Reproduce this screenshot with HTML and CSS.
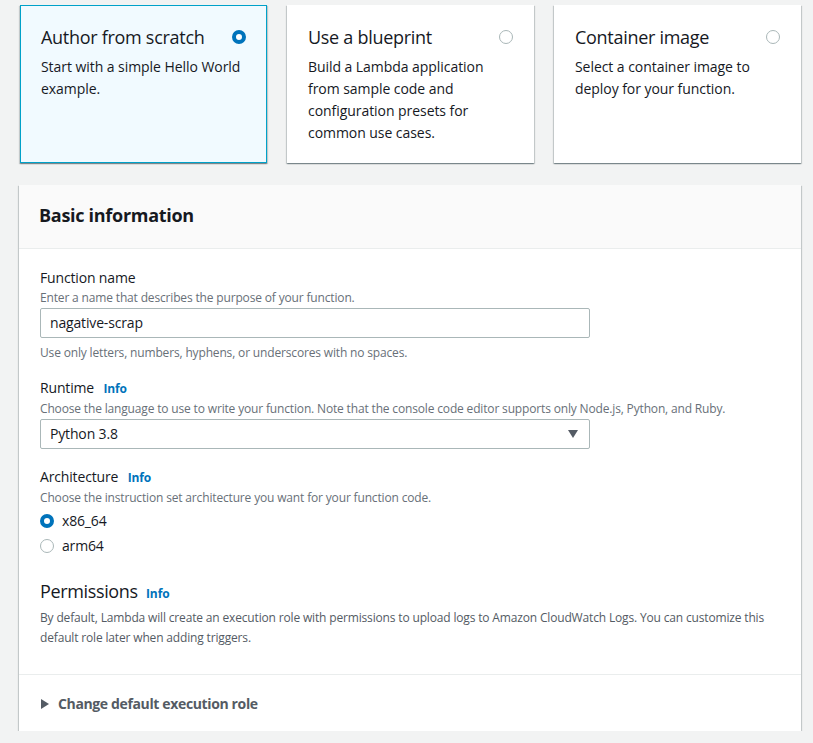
FILE: index.html
```html
<!DOCTYPE html>
<html lang="en">
<head>
<meta charset="utf-8">
<title>Create function</title>
<link rel="stylesheet" href="styles.css">
</head>
<body>
<div class="page">
  <div class="cards">
    <div class="card selected">
      <div class="card-head">
        <span class="card-title">Author from scratch</span>
        <span class="radio on"></span>
      </div>
      <p class="card-desc">Start with a simple Hello World example.</p>
    </div>
    <div class="card">
      <div class="card-head">
        <span class="card-title">Use a blueprint</span>
        <span class="radio"></span>
      </div>
      <p class="card-desc">Build a Lambda application from sample code and configuration presets for common use cases.</p>
    </div>
    <div class="card">
      <div class="card-head">
        <span class="card-title">Container image</span>
        <span class="radio"></span>
      </div>
      <p class="card-desc">Select a container image to deploy for your function.</p>
    </div>
  </div>

  <div class="panel">
    <div class="panel-header"><h2>Basic information</h2></div>
    <div class="panel-body">
      <div class="field">
        <div class="label">Function name</div>
        <div class="desc">Enter a name that describes the purpose of your function.</div>
        <div class="input">nagative-scrap</div>
        <div class="constraint">Use only letters, numbers, hyphens, or underscores with no spaces.</div>
      </div>
      <div class="field gap1">
        <div class="label">Runtime <a class="info">Info</a></div>
        <div class="desc">Choose the language to use to write your function. Note that the console code editor supports only Node.js, Python, and Ruby.</div>
        <div class="input select"><span>Python 3.8</span><span class="caret-down"></span></div>
      </div>
      <div class="field gap2">
        <div class="label">Architecture <a class="info">Info</a></div>
        <div class="desc">Choose the instruction set architecture you want for your function code.</div>
        <div class="radios">
          <div class="radio-row"><span class="radio on"></span><span>x86_64</span></div>
          <div class="radio-row"><span class="radio"></span><span>arm64</span></div>
        </div>
      </div>
      <div class="field gap3">
        <div class="perm-title">Permissions <a class="info">Info</a></div>
        <div class="perm-desc">By default, Lambda will create an execution role with permissions to upload logs to Amazon CloudWatch Logs. You can customize this default role later when adding triggers.</div>
      </div>
    </div>
    <div class="panel-footer">
      <span class="caret-right"></span><span class="expander">Change default execution role</span>
    </div>
  </div>
</div>
</body>
</html>
```

FILE: styles.css
```css
* { box-sizing: border-box; }
html, body { margin: 0; padding: 0; }
body {
  background: #f2f3f3;
  font-family: "Open Sans", "Noto Sans", Arial, sans-serif;
  letter-spacing: -0.01em;
  color: #16191f;
}
.page {
  padding: 5px 12px 0 19px;
}
.cards {
  display: flex;
  gap: 20px;
  margin-left: 1px;
}
.card {
  width: 247px;
  height: 158px;
  background: #fff;
  padding: 20px 20px 0 20px;
  border: 1px solid transparent;
  box-shadow: 0 1px 1px 0 rgba(0,28,36,.3), 1px 1px 1px 0 rgba(0,28,36,.15), -1px 1px 1px 0 rgba(0,28,36,.15);
}
.card.selected {
  background: #f1faff;
  border-color: #00a1c9;
}
.card-head {
  display: flex;
  justify-content: space-between;
  align-items: center;
  height: 22px;
}
.card-title {
  font-size: 18px;
  line-height: 22px;
  letter-spacing: -0.016em;
}
.card-desc {
  margin: 8px 0 0;
  font-size: 14px;
  line-height: 22px;
  letter-spacing: -0.004em;
}
.radio {
  display: inline-block;
  width: 14px;
  height: 14px;
  border-radius: 50%;
  border: 1px solid #aab7b8;
  background: #fff;
  flex: none;
}
.radio.on {
  border: 4px solid #0073bb;
}
.panel {
  margin-top: 22px;
  background: #fff;
  width: 782px;
  box-shadow: 0 1px 1px 0 rgba(0,28,36,.3), 1px 1px 1px 0 rgba(0,28,36,.15), -1px 1px 1px 0 rgba(0,28,36,.15);
}
.panel-header {
  background: #fafafa;
  border-bottom: 1px solid #eaeded;
  padding: 19px 20px 22px;
}
.panel-header h2 {
  margin: 0;
  font-size: 18px;
  line-height: 22px;
  font-weight: 700;
  letter-spacing: -0.016em;
}
.panel-body {
  padding: 18px 20px 26px 21px;
  border-bottom: 1px solid #eaeded;
}
.label {
  font-size: 14px;
  line-height: 22px;
}
.info {
  font-size: 12px;
  font-weight: 700;
  color: #0073bb;
  margin-left: 6px;
}
.desc, .constraint {
  font-size: 12px;
  line-height: 18px;
  color: #687078;
}
.input {
  margin-top: 1px;
  width: 550px;
  height: 30px;
  border: 1px solid #aab7b8;
  border-radius: 2px;
  padding: 0 9px;
  font-size: 14px;
  line-height: 28px;
  display: flex;
  align-items: center;
  justify-content: space-between;
}
.constraint { margin-top: 6px; }
.caret-down {
  width: 0;
  height: 0;
  border-left: 5px solid transparent;
  border-right: 5px solid transparent;
  border-top: 8px solid #545b64;
  margin-right: 2px;
}
.gap1 { margin-top: 15px; }
.gap2 { margin-top: 17px; }
.gap3 { margin-top: 21px; }
.radios {
  margin-top: 3px;
  display: flex;
  flex-direction: column;
  gap: 3px;
}
.radio-row {
  display: flex;
  align-items: center;
  gap: 8px;
  font-size: 14px;
  line-height: 22px;
}
.perm-title {
  font-size: 18px;
  line-height: 26px;
  letter-spacing: -0.02em;
}
.perm-title .info { margin-left: 4px; letter-spacing: -0.01em; }
.perm-desc {
  margin-top: 1px;
  font-size: 12px;
  line-height: 20px;
  color: #545b64;
}
.panel-footer {
  padding: 17px 20px 16px 22px;
  display: flex;
  align-items: center;
  height: 56px;
}
.caret-right {
  width: 0;
  height: 0;
  border-top: 5px solid transparent;
  border-bottom: 5px solid transparent;
  border-left: 8px solid #545b64;
  margin-right: 9px;
}
.expander {
  font-size: 14px;
  line-height: 22px;
  font-weight: 700;
  color: #545b64;
  letter-spacing: -0.026em;
}
```
